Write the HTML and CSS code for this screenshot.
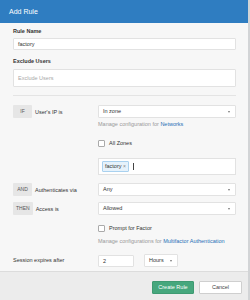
FILE: index.html
```html
<!DOCTYPE html>
<html>
<head>
<meta charset="utf-8">
<link rel="stylesheet" href="styles.css">
</head>
<body>
<div class="modal">
  <header class="hd">Add Rule</header>
  <div class="bd">
    <div class="field">
      <div class="lbl">Rule Name</div>
      <div class="input">factory</div>
    </div>
    <div class="field">
      <div class="lbl">Exclude Users</div>
      <div class="input tall ph">Exclude Users</div>
    </div>
    <div class="divider"></div>

    <div class="row first">
      <div class="cond"><span class="badge">IF</span><span>User's IP is</span></div>
      <div class="select">In zone<span class="caret"></span></div>
    </div>
    <div class="row help-row">
      <div></div>
      <div class="help">Manage configuration for <a class="link">Networks</a></div>
    </div>
    <div class="row check-row">
      <div></div>
      <div class="check"><span class="box"></span>All Zones</div>
    </div>
    <div class="row tags-row">
      <div></div>
      <div class="tags"><span class="tag">factory <span class="x">×</span></span><span class="cursor"></span></div>
    </div>
    <div class="row and-row">
      <div class="cond"><span class="badge">AND</span><span>Authenticates via</span></div>
      <div class="select">Any<span class="caret"></span></div>
    </div>
    <div class="row then-row">
      <div class="cond"><span class="badge">THEN</span><span>Access is</span></div>
      <div class="select">Allowed<span class="caret"></span></div>
    </div>
    <div class="row check-row2">
      <div></div>
      <div class="check"><span class="box"></span>Prompt for Factor</div>
    </div>
    <div class="row help-row2">
      <div></div>
      <div class="help">Manage configurations for <a class="link">Multifactor Authentication</a></div>
    </div>
    <div class="row session-row">
      <div class="plain">Session expires after</div>
      <div class="session">
        <div class="input small">2</div>
        <div class="select hours">Hours<span class="caret"></span></div>
      </div>
    </div>
  </div>
  <footer class="ft">
    <span class="btn primary">Create Rule</span>
    <span class="btn">Cancel</span>
  </footer>
</div>
</body>
</html>
```
FILE: styles.css
```css
html, body {
  margin: 0;
  padding: 0;
}
body {
  background: #d2d4d6;
  width: 250px;
  height: 300px;
  overflow: hidden;
  font-family: "Liberation Sans", Arial, sans-serif;
  font-size: 5.5px;
  color: #333;
}
.modal {
  width: 248px;
  height: 300px;
  background: #f7f7f7;
  display: flex;
  flex-direction: column;
}
.hd {
  height: 23px;
  line-height: 23px;
  background: #2f7dc1;
  color: #fff;
  font-size: 7px;
  padding-left: 9px;
}
.bd {
  padding: 5px 12px 2px 13px;
  flex: 1;
}
.lbl {
  font-weight: bold;
  line-height: 7px;
  margin-bottom: 3px;
}
.field + .field .lbl {
  margin-bottom: 4px;
}
.field + .field {
  margin-top: 8px;
}
.input {
  background: #fff;
  border: 1px solid #e2e2e2;
  border-radius: 1px;
  height: 10px;
  line-height: 10px;
  padding: 0 4px;
}
.input.tall {
  height: 16px;
  line-height: 16px;
}
.ph {
  color: #a8a8a8;
}
.divider {
  height: 1px;
  background: #e4e4e4;
  margin-top: 8px;
}
.row {
  display: grid;
  grid-template-columns: 85px 1fr;
  align-items: center;
}
.row.first { margin-top: 9px; }
.cond {
  display: flex;
  align-items: center;
  gap: 3px;
}
.badge {
  background: #e6e6e6;
  color: #555;
  height: 13px;
  line-height: 13px;
  min-width: 19px;
  padding: 0 3px;
  box-sizing: border-box;
  text-align: center;
  border-radius: 1px;
  font-size: 5px;
}
.select {
  position: relative;
  background: #fff;
  border: 1px solid #e2e2e2;
  border-radius: 1px;
  height: 11px;
  line-height: 11px;
  padding: 0 4px;
}
.caret {
  position: absolute;
  right: 5px;
  top: 5px;
  width: 0;
  height: 0;
  border-left: 1.5px solid transparent;
  border-right: 1.5px solid transparent;
  border-top: 2px solid #777;
}
.help {
  color: #999;
  line-height: 7px;
}
.link {
  color: #1f6fb6;
}
.help-row { margin-top: 3px; }
.check {
  display: flex;
  align-items: center;
  gap: 4px;
  line-height: 7px;
}
.box {
  width: 5px;
  height: 5px;
  border: 1px solid #aaa;
  background: #fff;
  border-radius: 1px;
}
.check-row { margin-top: 12px; }
.tags-row { margin-top: 11px; }
.tags {
  background: #fff;
  border: 1px solid #e2e2e2;
  height: 15px;
  display: flex;
  align-items: center;
  padding: 0 3px;
  gap: 4px;
}
.tag {
  background: #e6f2fb;
  border: 1px solid #a9d1ef;
  border-radius: 1px;
  height: 9px;
  line-height: 9px;
  padding: 0 2px;
}
.tag .x {
  color: #888;
  font-size: 5px;
}
.cursor {
  width: 1px;
  height: 7px;
  background: #444;
}
.and-row { margin-top: 8px; }
.then-row { margin-top: 6px; }
.check-row2 { margin-top: 10px; }
.help-row2 { margin-top: 6px; }
.session-row { margin-top: 9px; }
.plain {
  line-height: 7px;
}
.session {
  display: flex;
  align-items: center;
  gap: 10px;
}
.input.small {
  width: 26px;
}
.select.hours {
  width: 24px;
}
.ft {
  height: 29px;
  background: #ececec;
  border-top: 1px solid #dcdcdc;
  display: flex;
  justify-content: flex-end;
  align-items: flex-start;
  padding: 9px 6px 0 0;
  box-sizing: border-box;
  gap: 5px;
}
.btn {
  height: 13px;
  line-height: 11px;
  box-sizing: border-box;
  border: 1px solid #cfcfcf;
  background: #fff;
  border-radius: 1px;
  text-align: center;
  width: 43px;
  color: #444;
}
.btn.primary {
  background: #46a77d;
  border-color: #3f9a72;
  color: #fff;
  width: 42px;
}
```
